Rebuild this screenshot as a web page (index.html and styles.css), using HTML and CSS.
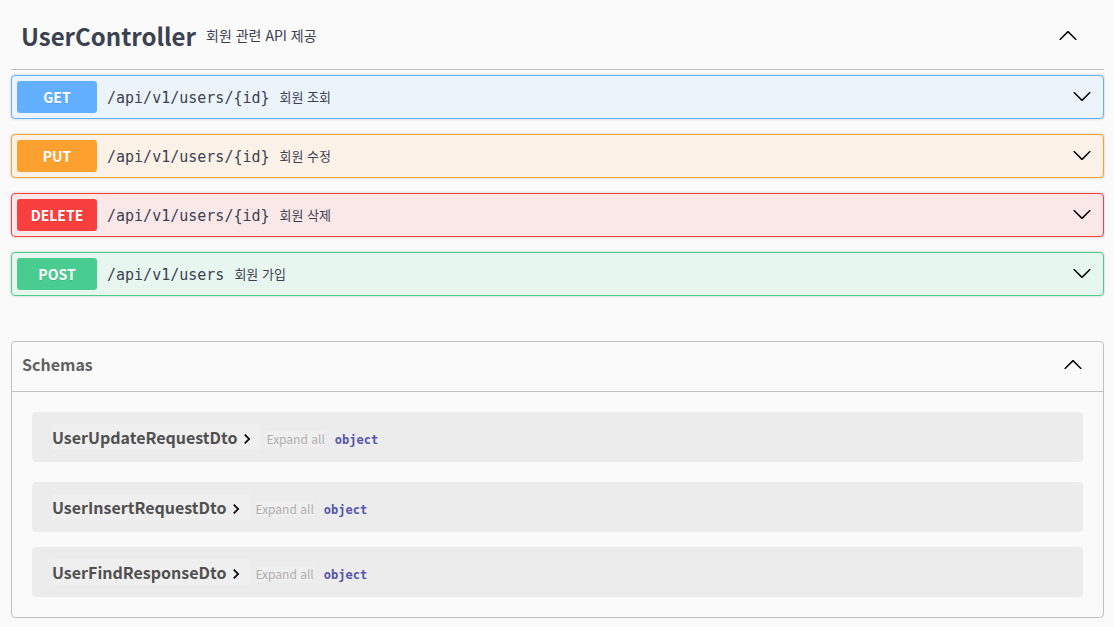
FILE: index.html
```
<!DOCTYPE html>
<html lang="ko">
<head>
<meta charset="utf-8">
<title>UserController</title>
<link rel="stylesheet" href="styles.css">
</head>
<body>
<svg class="defs" aria-hidden="true">
  <symbol id="down" viewBox="0 0 20 20"><path d="M17.418 6.109c.272-.268.709-.268.979 0s.271.701 0 .969l-7.908 7.83c-.27.268-.707.268-.979 0l-7.908-7.83c-.27-.268-.27-.701 0-.969.271-.268.709-.268.979 0L10 13.25l7.418-7.141z"/></symbol>
  <symbol id="up" viewBox="0 0 20 20"><path d="M17.418 14.908c.272.27.709.27.979 0s.271-.701 0-.969l-7.908-7.83c-.27-.268-.707-.268-.979 0l-7.908 7.83c-.27.268-.27.701 0 .969.271.27.709.27.979 0L10 7.767l7.418 7.141z"/></symbol>
  <symbol id="right" viewBox="0 0 24 24"><path d="M10 6L8.59 7.41 13.17 12l-4.58 4.59L10 18l6-6z"/></symbol>
</svg>
<main class="page">
  <section class="controller">
    <header class="tag">
      <h1 class="tag-name">UserController</h1>
      <p class="tag-text">회원 관련 API 제공</p>
      <button class="toggle" aria-label="Collapse operation"><svg class="arrow"><use href="#up"/></svg></button>
    </header>
    <div class="operations">
      <div class="op get"><button class="op-main"><span class="method">GET</span><span class="path">/api/v1/users/{id}</span><span class="summary">회원 조회</span></button><button class="toggle" aria-label="get /api/v1/users/{id}"><svg class="arrow"><use href="#down"/></svg></button></div>
      <div class="op put"><button class="op-main"><span class="method">PUT</span><span class="path">/api/v1/users/{id}</span><span class="summary">회원 수정</span></button><button class="toggle" aria-label="put /api/v1/users/{id}"><svg class="arrow"><use href="#down"/></svg></button></div>
      <div class="op delete"><button class="op-main"><span class="method">DELETE</span><span class="path">/api/v1/users/{id}</span><span class="summary">회원 삭제</span></button><button class="toggle" aria-label="delete /api/v1/users/{id}"><svg class="arrow"><use href="#down"/></svg></button></div>
      <div class="op post"><button class="op-main"><span class="method">POST</span><span class="path">/api/v1/users</span><span class="summary">회원 가입</span></button><button class="toggle" aria-label="post /api/v1/users"><svg class="arrow"><use href="#down"/></svg></button></div>
    </div>
  </section>
  <section class="schemas">
    <h2 class="schemas-head"><button class="schemas-toggle"><span>Schemas</span><svg class="arrow"><use href="#up"/></svg></button></h2>
    <div class="models">
      <article class="model"><button class="model-name">UserUpdateRequestDto<svg class="chevron"><use href="#right"/></svg></button><button class="expand">Expand all</button><strong class="type">object</strong></article>
      <article class="model"><button class="model-name">UserInsertRequestDto<svg class="chevron"><use href="#right"/></svg></button><button class="expand">Expand all</button><strong class="type">object</strong></article>
      <article class="model"><button class="model-name">UserFindResponseDto<svg class="chevron"><use href="#right"/></svg></button><button class="expand">Expand all</button><strong class="type">object</strong></article>
    </div>
  </section>
</main>
</body>
</html>
```
FILE: styles.css
```
* { box-sizing: border-box; }
body {
  margin: 0;
  background: #fafafa;
  color: #3b4151;
  font-family: "Noto Sans CJK KR", "Noto Sans", sans-serif;
}
button {
  margin: 0;
  padding: 0;
  border: 0;
  background: none;
  color: inherit;
  font: inherit;
  text-align: left;
  cursor: pointer;
}
.defs { position: absolute; width: 0; height: 0; }
.page { padding: 5px 10px 9px 11px; }
.arrow { display: block; width: 20px; height: 20px; fill: #000; }
.toggle { flex: none; padding: 0 11px; }

.tag {
  display: flex;
  align-items: center;
  height: 65px;
  padding: 0 15px 4px 10px;
  border-bottom: 1px solid #c0c1c5;
}
.tag-name { margin: 0; padding-top: 2px; font-size: 24px; line-height: 36px; font-weight: 700; }
.tag-text { flex: 1; margin: 0; padding: 0 10px; font-size: 14px; line-height: 20px; }

.operations { display: flex; flex-direction: column; gap: 15px; padding-top: 5px; }
.op {
  display: flex;
  align-items: center;
  padding: 5px 0 5px 5px;
  border: 1px solid var(--tone);
  border-radius: 4px;
  background: var(--fill);
  box-shadow: 0 0 3px rgba(0, 0, 0, .19);
}
.op .toggle { padding-bottom: 2px; }
.get { --tone: #61affe; --fill: #ebf3fb; }
.put { --tone: #fca130; --fill: #fbf1e6; }
.delete { --tone: #f93e3e; --fill: #fae7e7; }
.post { --tone: #49cc90; --fill: #e8f6f0; }
.op-main { display: flex; flex: 1; align-items: center; }
.method {
  width: 80px;
  border-radius: 3px;
  background: var(--tone);
  color: #fff;
  font-size: 14px;
  font-weight: 700;
  line-height: 32px;
  text-align: center;
  text-shadow: 0 1px 0 rgba(0, 0, 0, .1);
}
.path {
  padding: 2px 10px 0;
  font-family: "DejaVu Sans Mono", monospace;
  font-size: 15px;
  line-height: 20px;
}
.summary { font-size: 13px; line-height: 20px; }

.schemas { margin-top: 45px; border: 1px solid #c0c1c5; border-radius: 4px; color: #505050; }
.schemas-head { margin: 0; border-bottom: 1px solid #c0c1c5; color: #606060; }
.schemas-toggle {
  display: flex;
  align-items: center;
  justify-content: space-between;
  width: 100%;
  height: 49px;
  padding: 0 20px 6px 10px;
  font-size: 16px;
  font-weight: 700;
}
.models { padding: 20px; }
.model {
  display: flex;
  align-items: center;
  height: 50px;
  margin-bottom: 15px;
  padding: 0 20px;
  border-radius: 4px;
  background: #ececec;
}
.model:first-child { margin-bottom: 20px; }
.model:last-child { margin-bottom: 0; }
.model-name {
  display: flex;
  align-items: center;
  padding-right: 4px;
  background: #efefef;
  font-size: 16px;
  font-weight: 700;
  line-height: 26px;
}
.chevron { width: 20px; height: 20px; margin-top: 4px; fill: #000; }
.expand { margin: 4px 0 0 5px; background: #efefef; color: #afaeae; font-size: 12px; line-height: 16px; }
.type { margin: 5px 0 0 10px; color: #5555aa; font: 700 12px/16px "DejaVu Sans Mono", monospace; }
```
